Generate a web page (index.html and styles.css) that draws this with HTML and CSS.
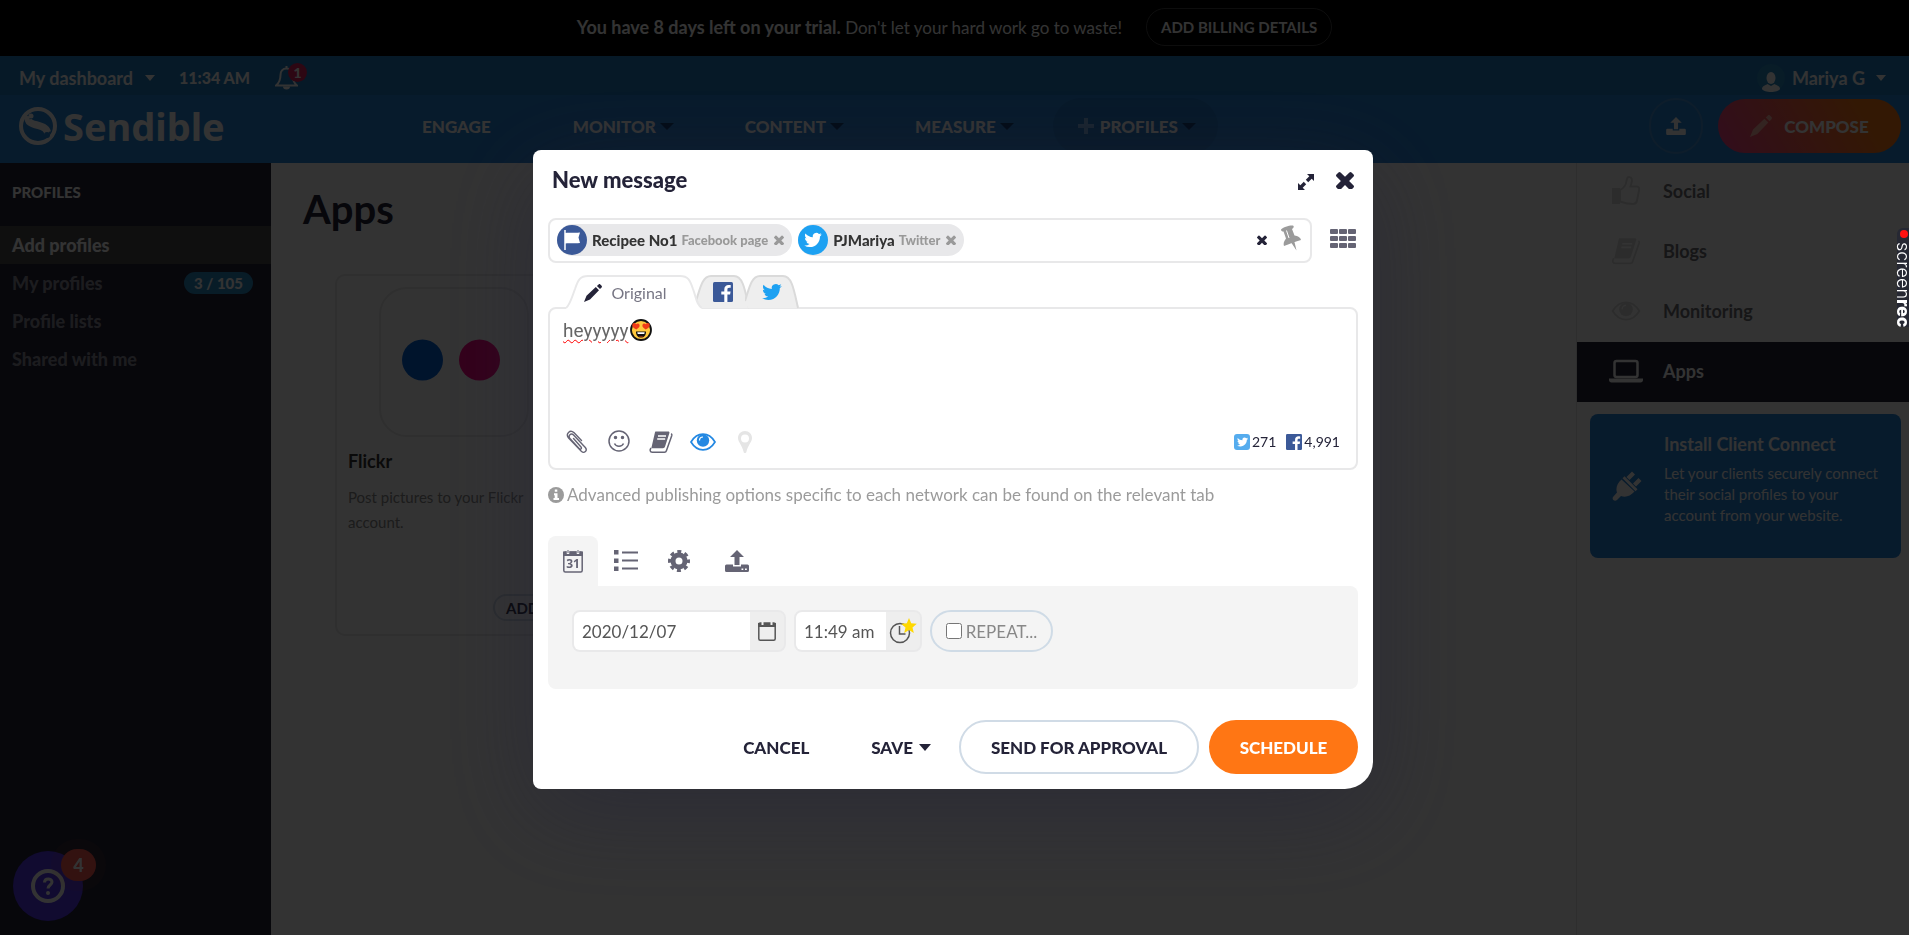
FILE: index.html
```html
<!DOCTYPE html>
<html lang="en">
<head>
<meta charset="utf-8">
<title>Sendible - New message</title>
<link rel="stylesheet" href="styles.css">
</head>
<body>
<svg class="defs" aria-hidden="true">
  <symbol id="times" viewBox="302 238 1188 1188"><path d="M1490 1322q0 40-28 68l-136 136q-28 28-68 28t-68-28l-294-294-294 294q-28 28-68 28t-68-28l-136-136q-28-28-28-68t28-68l294-294-294-294q-28-28-28-68t28-68l136-136q28-28 68-28t68 28l294 294 294-294q28-28 68-28t68 28l136 136q28 28 28 68t-28 68l-294 294 294 294q28 28 28 68z" transform="translate(0 -64)"/></symbol>
  <symbol id="bird" viewBox="0 1 24 22"><path d="M23.953 4.57a10 10 0 01-2.825.775 4.958 4.958 0 002.163-2.723c-.951.555-2.005.959-3.127 1.184a4.92 4.92 0 00-8.384 4.482C7.69 8.095 4.067 6.13 1.64 3.162a4.822 4.822 0 00-.666 2.475c0 1.71.87 3.213 2.188 4.096a4.904 4.904 0 01-2.228-.616v.06a4.923 4.923 0 003.946 4.827 4.996 4.996 0 01-2.212.085 4.936 4.936 0 004.604 3.417 9.867 9.867 0 01-6.102 2.105c-.39 0-.779-.023-1.17-.067a13.995 13.995 0 007.557 2.209c9.053 0 13.998-7.496 13.998-13.985 0-.21 0-.42-.015-.63A9.935 9.935 0 0024 4.59z"/></symbol>
  <symbol id="fb" viewBox="0 0 20 20"><rect width="20" height="20" rx="1.500" fill="#3b5998"/><path d="M11.300 20v-7.600H8.300V9.500h3V7.400c0-2.900 1.700-4.500 4.300-4.500.9 0 1.600.1 2.100.2v2.700h-1.600c-1.300 0-1.700.7-1.700 1.700v2h3.200l-.5 2.900h-2.700V20z" fill="#fff"/></symbol>
  <symbol id="pencil" viewBox="0 0 18 18"><path d="M0 18 2.500 11.800 11.800 3l3.200 3.200-9 9.300zM12.900 2 14.600.4c.5-.5 1.200-.5 1.700 0l1.300 1.300c.5.500.5 1.200 0 1.700L16 5.100z"/></symbol>
  <symbol id="upload" viewBox="0 0 24 22"><path d="M12 0 19 7h-4.500v8h-5V7H5zM1.500 14.500H8V16.500h8v-2h6.500A1.500 1.500 0 0 1 24 16v4.500a1.500 1.500 0 0 1-1.500 1.500h-21A1.500 1.500 0 0 1 0 20.500V16a1.500 1.500 0 0 1 1.500-1.500z"/><path d="M16.500 18.500h1.800v1.500h-1.800zm3.500 0h1.800v1.500H20z" class="hole"/></symbol>
  <symbol id="book" viewBox="0 0 24 23"><path d="M6.500 1h12.700c1 0 1.500.7 1.200 1.600L16 16.300c-.3.900-1 1.400-2 1.400H2.300L6 1.800C6.100 1.300 6.200 1 6.500 1z"/><path d="M9 5.500h8M8.200 8.500h8" stroke="var(--under, #fff)" stroke-width="1.300"/><path d="M2 17.500C.5 19.500 1 21.700 3.200 21.700H15.500c1 0 1.600-.4 1.900-1.400L22.800 5c.2-.7 0-1.300-.6-1.800" fill="none" stroke="currentColor" stroke-width="1.500"/></symbol>
  <symbol id="eye" viewBox="0 0 26 18"><path d="M1 9C4 4 8 1.200 13 1.200S22 4 25 9c-3 5-7 7.800-12 7.800S4 14 1 9z" fill="none" stroke="currentColor" stroke-width="1.700"/><circle cx="13" cy="7.500" r="6.200"/><path d="M9.500 7.500A3.500 3.500 0 0 1 13 4" fill="none" stroke="var(--under, #fff)" stroke-width="1.200"/></symbol>
</svg>

<div class="trial">
  <p><strong>You have 8 days left on your trial.</strong> Don't let your hard work go to waste!</p>
  <button class="billing">ADD BILLING DETAILS</button>
</div>

<header>
  <div class="account">
    <button class="plain dash">My dashboard <i class="caret"></i></button>
    <span class="clock">11:34 AM</span>
    <button class="plain bell" aria-label="Notifications">
      <svg width="23" height="24" viewBox="0 0 23 24"><path d="M11.500 2.500c-4 0-6 3-6 6.500 0 5.500-1.500 8-4.500 10.500h21c-3-2.500-4.500-5-4.500-10.500 0-3.500-2-6.500-6-6.500zM11.500 0v3" fill="none" stroke="currentColor" stroke-width="2"/><path d="M8 20.500a3.500 3 0 0 0 7 0z" fill="currentColor"/></svg>
      <span class="count">1</span>
    </button>
    <button class="plain user">
      <svg width="28" height="28" viewBox="0 0 28 28"><circle cx="14" cy="14" r="14" fill="#2a8bc4"/><ellipse cx="14" cy="14" rx="4.500" ry="6" fill="#fff"/><path d="M5 25c0-3 4-4 5.500-5l3.500 2 3.500-2c1.500 1 5.500 2 5.500 5-2 4-16 4-18 0z" fill="#fff"/></svg>
      Mariya G <i class="caret"></i></button>
  </div>
  <div class="mainbar">
    <a class="logo" href="#">
      <svg width="38" height="38" viewBox="0 0 38 38"><circle cx="19" cy="19" r="17" fill="none" stroke="#fff" stroke-width="4"/><path d="M8 9c-1 7 4 9 11 10.500 6 1.300 9 4 9 8.500M10 13c3 5 17 2.500 19.500 12" fill="none" stroke="#fff" stroke-width="5"/><circle cx="12" cy="9" r="2.500" fill="#fff"/><circle cx="28" cy="28" r="3" fill="#2785d9"/></svg>
      <span>Sendible</span></a>
    <nav class="menu">
      <a href="#" class="engage">ENGAGE</a>
      <a href="#">MONITOR <i class="caret dark"></i></a>
      <a href="#">CONTENT <i class="caret dark"></i></a>
      <a href="#">MEASURE <i class="caret dark"></i></a>
      <a href="#" class="profiles"><svg width="16" height="16" viewBox="0 0 16 16"><path d="M8 0v16M0 8h16" stroke="#7fb5e8" stroke-width="4"/></svg> PROFILES <i class="caret dark"></i></a>
    </nav>
    <button class="up" aria-label="Upload"><svg width="20" height="18" fill="currentColor"><use href="#upload"/></svg></button>
    <button class="compose"><svg width="22" height="22" fill="#ffb3a6"><use href="#pencil"/></svg>COMPOSE</button>
  </div>
</header>

<div class="columns">
  <aside class="side">
    <h2>PROFILES</h2>
    <a href="#" class="on">Add profiles</a>
    <a href="#">My profiles <span>3 / 105</span></a>
    <a href="#">Profile lists</a>
    <a href="#">Shared with me</a>
  </aside>
  <main>
    <h1>Apps</h1>
    <article class="app">
      <div class="tile"><svg width="104" height="46" viewBox="0 0 104 46"><circle cx="20.500" cy="21" r="20.500" fill="#0063dc"/><circle cx="77.500" cy="21" r="20.500" fill="#ff0084"/></svg></div>
      <h3>Flickr</h3>
      <p>Post pictures to your Flickr account.</p>
      <button>ADD</button>
    </article>
  </main>
  <aside class="right">
    <a href="#"><svg width="28" height="30" viewBox="0 0 28 30" fill="none" stroke="currentColor" stroke-width="2"><path d="M8 14c4-2 6-5 6.500-9 .3-3 1-4 2.500-4 3 0 3.500 3 2.500 6l-1 3.500h6.500c2 0 2.500 2 2 4l-2 10c-.5 2.500-2 3.500-4 3.500-5 0-9-1-13-2.500z"/><path d="M1 13h6v14H1z"/><path d="M1 13h5v14H1z" fill="currentColor"/></svg>Social</a>
    <a href="#"><svg width="30" height="28" fill="currentColor"><use href="#book"/></svg>Blogs</a>
    <a href="#"><svg width="30" height="20" fill="currentColor"><use href="#eye"/></svg>Monitoring</a>
    <a href="#" class="on"><svg width="34" height="24" viewBox="0 0 34 24"><rect x="5.500" y="2" width="23" height="16" rx="2" fill="none" stroke="currentColor" stroke-width="2.500"/><path d="M0 19.500h34v1.500c0 1.500-1 2.500-2.500 2.500h-29C1 23.500 0 22.500 0 21z" fill="currentColor"/></svg>Apps</a>
    <section class="promo">
      <svg width="30" height="30" viewBox="0 0 30 30" fill="currentColor"><path d="M1 26 5 21.500C3.500 17 5 12.500 9.500 8.500l13 12C18 25.500 13.500 26.500 9 25l-4 4c-2.500 2-5.500-.5-4-3zM10.500 7.300l2-2 13 13-2 2zM14.500 6 20 .5 23 3.500 17.500 9zM21 12.500 26.500 7l3 3L24 15.500z"/></svg>
      <div><h3>Install Client Connect</h3><p>Let your clients securely connect their social profiles to your account from your website.</p></div>
    </section>
  </aside>
</div>

<button class="help" aria-label="Help">
  <svg width="34" height="34" viewBox="0 0 34 34" fill="none" stroke="#fff"><circle cx="17" cy="17" r="15" stroke-width="4"/><path d="M13.500 13.500c0-5 7.500-4.500 7.500-.5 0 3-4 3-4 6.500" stroke-width="3"/><circle cx="17" cy="24" r="1" stroke-width="2"/></svg>
  <span>4</span>
</button>

<div class="overlay">
  <form class="dialog" role="dialog" aria-labelledby="title" onsubmit="return false">
    <div class="head">
      <h2 id="title">New message</h2>
      <button class="plain expand" aria-label="Expand"><svg width="16" height="16" viewBox="0 0 16 16" fill="currentColor"><path d="M9 0h7v7l-2.300-2.300-3.500 3.500-2.400-2.400 3.500-3.500zM7 16H0V9l2.300 2.300 3.500-3.500 2.400 2.400-3.500 3.500z"/><path d="M5 5l6 6" stroke="#fff" stroke-width="1.800"/></svg></button>
      <button class="plain" aria-label="Close"><svg width="18" height="18" fill="currentColor"><use href="#times"/></svg></button>
    </div>

    <div class="targets">
      <div class="picker">
        <span class="chip"><svg width="30" height="30" viewBox="0 0 30 30"><circle cx="15" cy="15" r="15" fill="#3b5998"/><path d="M8 5v20" stroke="#fff" stroke-width="1.500"/><path d="M8 8c5-1 8 .5 15-.5L21.500 12.500 23 18c-6 1-9-.5-15 .5z" fill="#fff"/></svg><b>Recipee No1</b><small>Facebook page</small><button class="plain" aria-label="Remove Recipee No1"><svg width="10" height="10" fill="currentColor"><use href="#times"/></svg></button></span>
        <span class="chip"><svg width="30" height="30" viewBox="0 0 30 30"><circle cx="15" cy="15" r="15" fill="#1da1f2"/><use href="#bird" x="6" y="7" width="18" height="16" fill="#fff"/></svg><b>PJMariya</b><small>Twitter</small><button class="plain" aria-label="Remove PJMariya"><svg width="10" height="10" fill="currentColor"><use href="#times"/></svg></button></span>
        <button class="plain clear" aria-label="Clear all"><svg width="10" height="10" fill="currentColor"><use href="#times"/></svg></button>
        <button class="plain pin" aria-label="Pin"><svg width="20" height="26" viewBox="0 0 20 26" fill="#9b9b9b"><path d="M0 4.500C2 2 9 0 12 .5c1.500 1 .5 2.500-1 3.500l2.500 6.500c3.500.5 6 2 6.500 4.500-5 1.500-12 4-17 6-1-2.500 0-5 2-7.500L2.500 6.500C1 6.500 0 6 0 4.500zM10.500 18l3-1 2 8.500z"/><path d="M5.500 5.500l2.500 7.500" stroke="#fff" stroke-width="1"/></svg></button>
      </div>
      <button class="plain grid" aria-label="All profiles"><svg width="26" height="20" viewBox="0 0 26 20" fill="currentColor"><rect width="8" height="5" rx="1"/><rect x="9" width="8" height="5" rx="1"/><rect x="18" width="8" height="5" rx="1"/><rect y="7" width="8" height="5" rx="1"/><rect x="9" y="7" width="8" height="5" rx="1"/><rect x="18" y="7" width="8" height="5" rx="1"/><rect y="14" width="8" height="5" rx="1"/><rect x="9" y="14" width="8" height="5" rx="1"/><rect x="18" y="14" width="8" height="5" rx="1"/></svg></button>
    </div>

    <div class="tabs">
      <button class="tab first"><svg class="shape" width="136" height="34" viewBox="0 0 136 34"><path d="M0 33C4 30 6 22 9 14 12 5 14 1 22 1h92c8 0 10 4 13 13 3 8 4 17 9 19v1H0z" fill="#fff"/><path d="M0 33C4 30 6 22 9 14 12 5 14 1 22 1h92c8 0 10 4 13 13 3 8 4 17 9 19" fill="none" stroke="#e8e8e9" stroke-width="2"/></svg><svg width="18" height="18" fill="#242338"><use href="#pencil"/></svg>Original</button>
      <button class="tab" aria-label="Facebook"><svg class="shape" width="54" height="34" viewBox="0 0 54 34"><path d="M0 26C4 14 6 1 15 1h23c9 0 11 14 16 32H6C3 33 2 29 0 26z" fill="#eee"/><path d="M0 26C4 14 6 1 15 1h23c9 0 11 14 15 32" fill="none" stroke="#dadada" stroke-width="2"/></svg><svg width="20" height="20"><use href="#fb"/></svg></button>
      <button class="tab" aria-label="Twitter"><svg class="shape" width="54" height="34" viewBox="0 0 54 34"><path d="M0 26C4 14 6 1 15 1h23c9 0 11 14 16 32H3C2 31 1 29 0 26z" fill="#eee"/><path d="M0 26C4 14 6 1 15 1h23c9 0 11 14 15 32" fill="none" stroke="#dadada" stroke-width="2"/></svg><svg width="20" height="18" fill="#1da1f2"><use href="#bird"/></svg></button>
    </div>

    <div class="editor">
      <div class="text" role="textbox" aria-label="Message" contenteditable="true"><span>heyyyyy</span><svg width="22" height="22" viewBox="0 0 22 22"><circle cx="11" cy="11" r="10" fill="#ffc83d" stroke="#111" stroke-width="1.800"/><path d="M6.300 10.500C3 9 1.500 7 2.500 5c1-1.600 3-1.200 3.600.3 1-1.400 3.200-1 3.500.7.300 2-1.400 3.300-3.300 4.500zM15.700 10.500C19 9 20.500 7 19.500 5c-1-1.600-3-1.200-3.600.3-1-1.400-3.200-1-3.500.7-.3 2 1.400 3.300 3.300 4.500z" fill="#f03a17"/><path d="M6 12.500h10c0 4-2 6-5 6s-5-2-5-6z" fill="#111"/><path d="M7.300 13.200h7.400l-.4 1.800H7.700z" fill="#fff"/><path d="M8.500 17.200h5a4 2.500 0 0 1-5 0z" fill="#f03a17"/></svg></div>
      <div class="tools">
        <button class="plain" aria-label="Attach"><svg width="22" height="24" viewBox="0 0 22 24" fill="none" stroke="currentColor" stroke-width="1.400" stroke-linecap="round"><path d="M7.500 8.500l7.500 8.500c1.200 1.600-.6 3-1.900 1.600L4.200 8.800C1.500 5.500 5 2.400 7.800 5.200L19.300 17.500c2.500 3-1 6.500-4 3.800L2.600 8C-.8 3.800 4 -.8 7.900 2.600L15.500 10.500"/></svg></button>
        <button class="plain" aria-label="Emoji"><svg width="22" height="24" viewBox="0 0 22 24" fill="none" stroke="currentColor" stroke-width="1.500"><circle cx="11" cy="11" r="10"/><path d="M6.500 13.500c1.500 3.500 7.500 3.500 9 0"/><circle cx="7.500" cy="7.500" r="1"  fill="currentColor"/><circle cx="14.500" cy="7.500" r="1" fill="currentColor"/></svg></button>
        <button class="plain" aria-label="Content library"><svg width="24" height="24" fill="currentColor"><use href="#book"/></svg></button>
        <button class="plain blue" aria-label="Preview"><svg width="26" height="18" fill="currentColor"><use href="#eye"/></svg></button>
        <button class="plain faint" aria-label="Location"><svg width="22" height="22" viewBox="0 0 22 22"><path d="M11 0c4 0 7 3 7 7 0 4-4 7-5.500 13.500-.3 2-2.700 2-3 0C8 14 4 11 4 7c0-4 3-7 7-7zm0 3.500a4 4 0 1 0 0 8 4 4 0 0 0 0-8z" fill="currentColor" fill-rule="evenodd"/></svg></button>
        <span class="left"><svg width="16" height="16" viewBox="0 0 16 16"><rect width="16" height="16" rx="3" fill="#55acee"/><use href="#bird" x="3" y="3" width="11" height="10" fill="#fff"/></svg>271</span>
        <span class="left"><svg width="16" height="16"><use href="#fb"/></svg>4,991</span>
      </div>
    </div>

    <p class="note"><svg width="16" height="16" viewBox="0 0 16 16"><circle cx="8" cy="8" r="8" fill="#9b9b9b"/><path d="M6.800 2.500h2.500v2.300H6.800zM6 6.300h3.500v4.800H11V13H5.500v-1.900h1.200V8.200H6z" fill="#fff"/></svg>Advanced publishing options specific to each network can be found on the relevant tab</p>

    <div class="options">
      <button class="on" aria-label="Schedule"><svg width="20" height="24" viewBox="0 0 20 24"><rect x=".8" y="3" width="18.400" height="20" rx="1.500" fill="none" stroke="currentColor" stroke-width="1.500"/><path d="M0 2.500h20V7H0z" fill="currentColor"/><path d="M5 0v5M15 0v5" stroke="#f4f4f4" stroke-width="2.500"/><path d="M5 1v3M15 1v3" stroke="currentColor"/><text x="10" y="18.500" text-anchor="middle" class="day">31</text></svg></button>
      <button aria-label="Queue"><svg width="24" height="22" viewBox="0 0 24 22" fill="currentColor"><path d="M0 0h4.500v4.500H0zM0 8.500h4.500V13H0zM0 16.500h4.500V21H0zM8 1.500h16v2H8zM8 9.500h16v2H8zM8 17.500h16v2H8z"/></svg></button>
      <button aria-label="Settings"><svg width="22" height="22" viewBox="0 0 22 22" fill="none" stroke="currentColor"><circle cx="11" cy="11" r="6" stroke-width="5"/><circle cx="11" cy="11" r="9.500" stroke-width="3" stroke-dasharray="4 3.461" stroke-dashoffset="2"/></svg></button>
      <button aria-label="Upload in bulk"><svg width="24" height="22" fill="currentColor"><use href="#upload"/></svg></button>
    </div>
    <div class="schedule">
      <div class="field date"><input type="text" value="2020/12/07" aria-label="Date"><button aria-label="Pick date"><svg width="18" height="20" viewBox="0 0 18 20"><rect x=".8" y="2" width="16.400" height="17.200" rx="1.500" fill="none" stroke="currentColor" stroke-width="1.500"/><path d="M0 2h18v4H0z" fill="currentColor"/><path d="M4.500 0v4M13.500 0v4" stroke="#eee" stroke-width="2"/></svg></button></div>
      <div class="field time"><input type="text" value="11:49 am" aria-label="Time"><button aria-label="Pick time"><svg width="28" height="26" viewBox="0 0 28 26"><circle cx="11" cy="15" r="9.500" fill="none" stroke="currentColor" stroke-width="1.500"/><path d="M10.500 8v8h6" fill="none" stroke="currentColor" stroke-width="1.500"/><path d="M20 0l2.200 5.200 5.600.5-4.300 3.700 1.300 5.500-4.800-3-4.800 3 1.300-5.500-4.300-3.700 5.600-.5z" fill="#ffd800"/></svg></button></div>
      <label class="repeat"><input type="checkbox">REPEAT...</label>
    </div>

    <div class="actions">
      <button class="plain cancel">CANCEL</button>
      <button class="plain save">SAVE <i class="caret"></i></button>
      <button class="approve">SEND FOR APPROVAL</button>
      <button class="go">SCHEDULE</button>
    </div>
  </form>
</div>

<div class="recorder"><i></i><span>screen<b>rec</b></span></div>
</body>
</html>
```
FILE: styles.css
```css
* { box-sizing: border-box; }
body {
  margin: 0;
  min-height: 100vh;
  display: flex;
  flex-direction: column;
  overflow: hidden;
  font-family: Lato, "Liberation Sans", sans-serif;
  font-size: 18px;
  color: #242338;
  background: #fff;
}
h1, h2, h3, p { margin: 0; }
button, input { font: inherit; color: inherit; }
a { color: inherit; text-decoration: none; }
svg { display: block; flex: none; }
.defs { position: absolute; width: 0; height: 0; }
.hole { fill: #fff; }
.plain { border: 0; padding: 0; background: none; }
.caret {
  display: inline-block;
  border: 6px solid transparent;
  border-top: 7px solid currentColor;
  border-bottom: 0;
}

/* trial banner */
.trial {
  height: 56px;
  padding-bottom: 2px;
  display: flex;
  align-items: center;
  justify-content: center;
  gap: 24px;
  background: #000;
  color: #fff;
}
.trial p { font-size: 17px; line-height: 24px; }
.trial strong { font-size: 18px; font-weight: 700; }
.billing {
  height: 38px;
  padding: 0 14px;
  border: 1px solid #444;
  border-radius: 19px;
  background: none;
  font-size: 15px;
  font-weight: 700;
}

/* header */
header { color: #fff; font-weight: 900; background: #2785d9; }
.account {
  height: 39px;
  padding: 4px 23px 0 19px;
  display: flex;
  align-items: center;
  background: #1e7dc3;
}
.account button { display: flex; align-items: center; gap: 12px; font-weight: 700; }
.account .caret { border-width: 5px; border-top-width: 6px; border-bottom-width: 0; }
.clock { margin: 0 25px 0 24px; font-size: 16px; }
.bell { position: relative; }
.count {
  position: absolute;
  left: 13px;
  top: -3px;
  width: 19px;
  height: 19px;
  border-radius: 50%;
  background: #e0245e;
  font-size: 14px;
  font-weight: 900;
  line-height: 19px;
}
.account .user { margin-left: auto; gap: 7px; }
.user .caret { margin-left: 4px; }
.mainbar { height: 68px; padding: 0 8px 6px 19px; display: flex; align-items: center; }
.logo {
  width: 403px;
  display: flex;
  align-items: center;
  gap: 6px;
  font: 700 38px/44px "Noto Sans", sans-serif;
}
.menu { display: flex; align-items: center; gap: 71px; font-size: 17px; }
.menu a { display: flex; align-items: center; gap: 4px; }
.menu .engage { margin-right: 11px; }
.menu .caret { border-width: 7px; border-bottom-width: 0; color: #0b3a72; }
.menu .profiles {
  height: 56px;
  margin-left: -32px;
  padding: 0 22px 0 25px;
  border-radius: 28px;
  background: #237ac9;
}
.profiles svg { margin-right: 2px; }
.up {
  width: 54px;
  height: 56px;
  margin-left: auto;
  border: 2px solid #4593d6;
  border-radius: 28px;
  background: none;
  display: grid;
  place-items: center;
}
.up .hole { fill: #2785d9; }
.compose {
  width: 183px;
  height: 54px;
  margin-left: 15px;
  border: 0;
  border-radius: 27px;
  background: linear-gradient(60deg, #f8418f, #ff7a14 80%);
  font-size: 17px;
  font-weight: 900;
  display: flex;
  align-items: center;
  justify-content: center;
  gap: 12px;
}

/* page columns */
.columns { flex: 1; display: flex; }
.side { width: 271px; background: #242338; color: #8d8d9a; font-weight: 900; }
.side h2 { padding: 19px 12px 0; font-size: 15px; line-height: 20px; height: 63px; color: #fff; font-weight: 900; }
.side a { height: 38px; padding: 0 18px 0 12px; display: flex; align-items: center; justify-content: space-between; }
.side a.on { background: #4a4a4e; color: #fff; }
.side a span { width: 69px; line-height: 22px; border-radius: 11px; background: #2a8bc4; color: #fff; font-size: 15px; text-align: center; }
main { flex: 1; padding: 22px 32px; }
main h1 { font-size: 40px; line-height: 48px; }
.app {
  position: relative;
  width: 238px;
  height: 362px;
  margin: 41px 0 0 32px;
  padding: 11px;
  border: 2px solid #e9e9ea;
  border-radius: 10px;
}
.tile { width: 150px; height: 150px; margin: 0 auto; border: 2px solid #e9e9ea; border-radius: 28px; display: grid; place-items: center; }
.app h3 { margin: 11px 0 11px; font-size: 18px; line-height: 26px; color: #333; }
.app p { font-size: 15px; line-height: 25px; color: #8b8b8b; }
.app button {
  position: absolute;
  right: 12px;
  bottom: 13px;
  width: 66px;
  height: 27px;
  padding: 0 0 0 11px;
  border: 2px solid #d0dbe6;
  border-radius: 14px;
  background: none;
  font-size: 15px;
  font-weight: 700;
  line-height: 20px;
  text-align: left;
}
.right { width: 333px; border-left: 1px solid #e4e4e4; font-weight: 700; }
.right a { height: 60px; padding: 0 0 3px 32px; display: flex; align-items: center; color: #6f6f74; }
.right a svg { width: 34px; margin-right: 20px; color: #ddd; }
.right a.on { background: #242338; color: #fff; }
.right a.on svg { color: #fff; }
.right a:first-child { height: 59px; }
.promo {
  height: 144px;
  margin: 12px 8px 0 13px;
  padding: 16px 16px 16px 22px;
  border-radius: 8px;
  display: flex;
  align-items: center;
  gap: 22px;
  background: #2785d9;
  color: #fff;
}
.promo div { height: 112px; }
.promo h3 { font-size: 18px; line-height: 28px; font-weight: 700; }
.promo p { margin-top: 5px; font-size: 15px; line-height: 21px; font-weight: 400; }
.help {
  position: fixed;
  left: 13px;
  bottom: 14px;
  width: 70px;
  height: 70px;
  border: 0;
  border-radius: 50%;
  background: #5537f0;
  display: grid;
  place-items: center;
}
.help span {
  position: absolute;
  left: 48px;
  top: -2px;
  width: 35px;
  height: 32px;
  border-radius: 16px;
  background: #ff5a50;
  box-shadow: 0 0 0 10px rgba(255, 110, 60, .08);
  color: #fff;
  font-weight: 900;
  line-height: 32px;
}

/* dialog */
.overlay {
  position: fixed;
  inset: 0;
  padding: 150px 3px 0 0;
  display: flex;
  justify-content: center;
  align-items: flex-start;
  background: rgba(0, 0, 0, .8);
}
.dialog {
  width: 840px;
  padding: 20px 15px 15px;
  border-radius: 8px 8px 28px 8px;
  background: #fff;
  box-shadow: 0 24px 96px rgba(36, 35, 56, .5);
}
.head { display: flex; align-items: center; gap: 22px; padding: 0 4px; }
.head h2 { flex: 1; font-size: 22px; line-height: 20px; font-weight: 900; }
.expand { padding-top: 4px; }
.targets { margin-top: 28px; display: flex; align-items: center; gap: 18px; }
.picker {
  flex: 1;
  height: 45px;
  padding: 0 9px 2px 7px;
  border: 2px solid #e8e8e9;
  border-radius: 8px;
  display: flex;
  align-items: center;
  gap: 6px;
}
.chip {
  height: 32px;
  padding-right: 8px;
  border-radius: 16px;
  display: flex;
  align-items: center;
  background: #e8e8ea;
  color: #999;
  line-height: 20px;
}
.chip b { margin: 0 4px 0 5px; font-size: 15px; font-weight: 900; color: #333; }
.chip small { margin-right: 6px; font-size: 13px; font-weight: 900; }
.clear { margin-left: auto; margin-right: 8px; }
.pin { align-self: flex-start; padding-top: 5px; }
.grid { width: 28px; padding-bottom: 3px; color: #656474; }

.tabs { margin: 11px 0 -2px 18px; display: flex; position: relative; }
.tab {
  position: relative;
  z-index: 0;
  width: 49px;
  height: 35px;
  padding: 0;
  border: 0;
  background: none;
  display: flex;
  align-items: center;
  justify-content: center;
  font-size: 16px;
  color: #777684;
}
.tab.first { width: 132px; gap: 9px; padding: 2px 13px 0 0; z-index: 1; }
.tab .shape { position: absolute; z-index: -1; left: -2px; top: 1px; }
.tab.first .shape { left: 0; }
.editor { height: 163px; border: 2px solid #e8e8e9; border-radius: 8px; display: flex; flex-direction: column; }
.text {
  flex: 1;
  padding: 10px 13px;
  display: flex;
  align-items: flex-start;
  gap: 2px;
  font: 400 19px/24px Roboto, sans-serif;
  color: #666;
  outline: 0;
}
.text span { text-decoration: underline wavy #f00; text-decoration-thickness: 1px; text-underline-offset: 2px; }
.tools { padding: 0 16px 13px 14px; height: 40px; display: flex; align-items: center; gap: 16px; color: #656474; }
.tools button { width: 26px; display: grid; place-items: center; }
.tools .blue { color: #2388e2; }
.tools .faint { color: #e5e5e5; }
.left { display: flex; align-items: center; gap: 2px; font-size: 14px; color: #242338; margin-left: -6px; }
.faint + .left { margin-left: auto; }
.note { margin: 14px 0 30px; display: flex; align-items: center; gap: 3px; font-size: 17px; line-height: 22px; color: #9b9b9b; }

.options { display: flex; color: #656474; gap: 3px; }
.options button { width: 50px; height: 50px; border: 0; border-radius: 8px 8px 0 0; background: none; display: grid; place-items: center; }
.options .on { background: #f4f4f4; }
.options button:last-child { margin-left: 5px; }
.day { font: 700 12px "Noto Sans", sans-serif; fill: #656474; }
.schedule {
  height: 103px;
  padding: 24px;
  display: flex;
  align-items: flex-start;
  gap: 8px;
  border-radius: 0 8px 8px 8px;
  background: #f4f4f4;
  color: #666;
}
.field { height: 42px; border: 2px solid #e9e9ea; border-radius: 8px; display: flex; overflow: hidden; background: #eee; }
.field input { min-width: 0; flex: 1; border: 0; padding: 0 8px; background: #fff; color: #555; outline: 0; font-size: 17px; }
.field button { width: 34px; border: 0; padding: 0; background: #eee; color: #555; display: grid; place-items: center; }
.date { width: 214px; }
.time { width: 128px; }
.time input { padding-right: 0; }
.repeat { width: 123px; height: 42px; border: 2px solid #cfdbe6; border-radius: 21px; display: flex; align-items: center; justify-content: center; gap: 4px; font-size: 17px; color: #888; }
.repeat input { width: 16px; height: 16px; margin: 0; }
.actions { margin-top: 31px; display: flex; justify-content: flex-end; align-items: center; gap: 10px; }
.actions button { height: 54px; font-size: 17px; font-weight: 900; }
.cancel { margin-right: 52px; }
.save { display: flex; align-items: center; gap: 6px; margin-right: 18px; }
.approve { width: 240px; border: 2px solid #d0dbe6; border-radius: 27px; background: #fff; }
.go { width: 149px; border: 0; border-radius: 27px; background: #ff7614; color: #fff; }

/* screen recorder handle */
.recorder {
  position: fixed;
  right: 0;
  top: 228px;
  width: 12px;
  height: 99px;
  padding-top: 2px;
  border-radius: 6px 0 0 6px;
  background: #262833;
  color: #fff;
}
.recorder i { display: block; width: 8px; height: 8px; margin: 0 0 0 3px; border-radius: 50%; background: #f11; }
.recorder span { display: block; margin-top: 4px; width: 12px; writing-mode: vertical-rl; font: 300 18px/12px Inter, sans-serif; }
.recorder b { font-weight: 800; }
```
